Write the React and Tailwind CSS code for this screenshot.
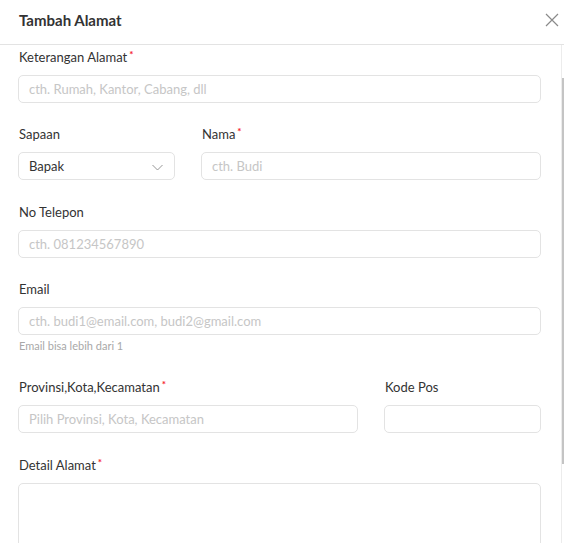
import React from "react";

const font = { fontFamily: "Lato, 'Noto Sans', sans-serif" };

function Label({ children, required }) {
  return (
    <div className="h-5 flex items-center text-[13px] text-[#333] leading-5 pl-[1px]">
      <span>{children}</span>
      {required && <span className="text-[#f5222d] font-bold text-[10px] leading-none ml-[2px] -mt-[7px]">*</span>}
    </div>
  );
}

function Input({ placeholder, className = "" }) {
  return (
    <div className={`mt-2 h-[28px] rounded-[5px] border border-[#e3e3e3] bg-white flex items-center px-[10px] pt-[2px] text-[13px] text-[#c6c6c6] ${className}`}>
      {placeholder}
    </div>
  );
}

export default function App() {
  return (
    <div className="w-[564px] h-[543px] bg-white overflow-hidden flex flex-col" style={font}>
      <div className="h-[45px] shrink-0 border-b border-[#e3e3e3] flex items-center justify-between pl-[19px] pr-[5px]">
        <div className="text-[15px] font-bold text-[#333] -mt-[4px]">Tambah Alamat</div>
        <svg width="14" height="14" viewBox="0 0 14 14" className="-mt-[4px]">
          <path d="M1 1 L13 13 M13 1 L1 13" stroke="#8a8a8a" strokeWidth="1.2" fill="none" />
        </svg>
      </div>
      <div className="flex flex-1 min-h-0">
        <div className="flex-1 pl-[18px] pr-[20px] pt-[2px] flex flex-col">
          <div>
            <Label required>Keterangan Alamat</Label>
            <Input placeholder="cth. Rumah, Kantor, Cabang, dll" />
          </div>
          <div className="flex gap-[26px] mt-[21px]">
            <div className="w-[157px]">
              <Label>Sapaan</Label>
              <div className="mt-2 h-[28px] rounded-[5px] border border-[#e3e3e3] flex items-center justify-between pl-[10px] pr-[11px] pt-[2px] text-[13px] text-[#333]">
                <span>Bapak</span>
                <svg width="11" height="7" viewBox="0 0 11 7">
                  <path d="M0.5 1 L5.5 6 L10.5 1" stroke="#8a8a8a" strokeWidth="0.9" fill="none" />
                </svg>
              </div>
            </div>
            <div className="flex-1">
              <Label required>Nama</Label>
              <Input placeholder="cth. Budi" />
            </div>
          </div>
          <div className="mt-[22px]">
            <Label>No Telepon</Label>
            <Input placeholder="cth. 081234567890" />
          </div>
          <div className="mt-[21px]">
            <Label>Email</Label>
            <Input placeholder="cth. budi1@email.com, budi2@gmail.com" />
            <div className="text-[11px] text-[#a8a8a8] mt-[3px] leading-[16px] pl-[1px]">Email bisa lebih dari 1</div>
          </div>
          <div className="flex gap-[26px] mt-[23px]">
            <div className="w-[340px]">
              <Label required>Provinsi,Kota,Kecamatan</Label>
              <Input placeholder="Pilih Provinsi, Kota, Kecamatan" />
            </div>
            <div className="flex-1">
              <Label>Kode Pos</Label>
              <Input placeholder="" />
            </div>
          </div>
          <div className="mt-[22px]">
            <Label required>Detail Alamat</Label>
            <div className="mt-2 h-[90px] rounded-[5px] border border-[#e3e3e3]" />
          </div>
        </div>
        <div className="w-[3px] shrink-0 border-l border-[#ececec] flex flex-col">
          <div className="h-[33px]" />
          <div className="h-[386px] bg-[#c4c4c4]" />
        </div>
      </div>
    </div>
  );
}
